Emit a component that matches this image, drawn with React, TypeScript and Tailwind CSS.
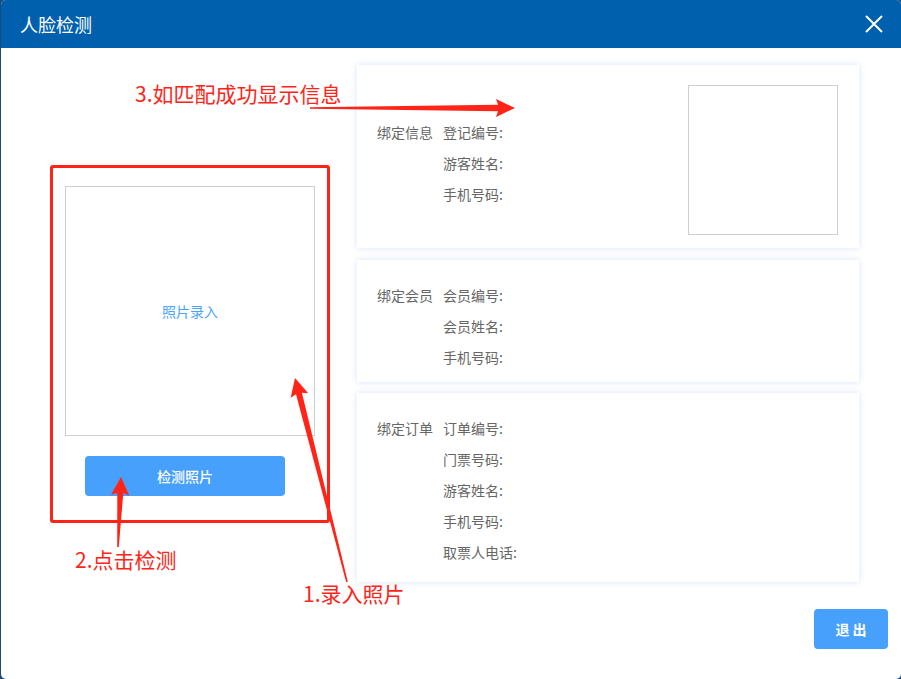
import React from 'react';

type Pt = [number, number];

// arrow as one filled polygon: thin tail growing to a wider shaft, then a head
const arrowPoints = (tail: Pt, tip: Pt, headLen: number, headHalf: number, tailHalf: number, shaftHalf: number) => {
  const dx = tip[0] - tail[0];
  const dy = tip[1] - tail[1];
  const len = Math.hypot(dx, dy);
  const ux = dx / len;
  const uy = dy / len;
  const nx = -uy;
  const ny = ux;
  const bx = tip[0] - ux * headLen;
  const by = tip[1] - uy * headLen;
  const pts: Pt[] = [
    [tail[0] + nx * tailHalf, tail[1] + ny * tailHalf],
    [bx + nx * shaftHalf, by + ny * shaftHalf],
    [bx - ux * 2 + nx * headHalf, by - uy * 2 + ny * headHalf],
    tip,
    [bx - ux * 2 - nx * headHalf, by - uy * 2 - ny * headHalf],
    [bx - nx * shaftHalf, by - ny * shaftHalf],
    [tail[0] - nx * tailHalf, tail[1] - ny * tailHalf],
  ];
  return pts.map((p) => `${p[0].toFixed(1)},${p[1].toFixed(1)}`).join(' ');
};

const InfoRows = ({ title, rows }: { title: string; rows: string[] }) => (
  <div className="flex text-[14px] text-[#666] leading-[31px]">
    <div className="w-[66px] shrink-0">{title}</div>
    <div className="flex flex-col">
      {rows.map((r) => (
        <div key={r}>{r}</div>
      ))}
    </div>
  </div>
);

const cardCls = 'bg-white shadow-[0_0_7px_rgba(205,218,242,0.75)] px-[20px]';

export default function App() {
  return (
    <div
      className="h-[679px] w-[901px] bg-[#1c4a7c] overflow-hidden"
      style={{ fontFamily: '"Microsoft YaHei", "Noto Sans CJK SC", "Noto Sans", sans-serif' }}
    >
      <div className="relative ml-[1px] h-[679px] w-[900px] rounded-[5px] bg-white overflow-hidden">
        {/* header */}
        <div className="flex h-[48px] items-center justify-between bg-[#0060ae] pl-[19px] pr-[18px]">
          <span className="text-[18px] text-white">人脸检测</span>
          <svg width="18" height="18" viewBox="0 0 18 18" className="text-white">
            <path d="M1 1 L17 17 M17 1 L1 17" stroke="currentColor" strokeWidth="2" />
          </svg>
        </div>

        {/* body */}
        <div className="flex flex-col">
          <div className="flex pt-[17px]">
            <div className="ml-[49px] mt-[100px]">
              <div className="box-border flex h-[358px] w-[280px] flex-col rounded-[3px] border-[3px] border-[#ff2216] px-[12px] pt-[18px]">
                <div className="box-border flex h-[250px] w-[250px] items-center justify-center border border-[#cfcfcf] text-[14px] text-[#4aa3ff]">
                  照片录入
                </div>
                <button
                  type="button"
                  className="ml-[20px] mt-[20px] h-[40px] w-[200px] rounded-[4px] bg-[#46a0fc] text-[14px] font-medium text-white"
                >
                  检测照片
                </button>
              </div>
            </div>

            <div className="ml-[27px] flex w-[502px] flex-col">
              <div className={`${cardCls} flex h-[183px] justify-between`}>
                <div className="pt-[52px]">
                  <InfoRows title="绑定信息" rows={['登记编号:', '游客姓名:', '手机号码:']} />
                </div>
                <div className="mt-[20px] mr-[1px] box-border h-[150px] w-[150px] border border-[#cfcfcf]" />
              </div>
              <div className={`${cardCls} mt-[12px] h-[122px] pt-[20px]`}>
                <InfoRows title="绑定会员" rows={['会员编号:', '会员姓名:', '手机号码:']} />
              </div>
              <div className={`${cardCls} mt-[11px] h-[189px] pt-[20px]`}>
                <InfoRows
                  title="绑定订单"
                  rows={['订单编号:', '门票号码:', '游客姓名:', '手机号码:', '取票人电话:']}
                />
              </div>
            </div>
          </div>

          <div className="flex justify-end pr-[13px] pt-[27px]">
            <button
              type="button"
              className="h-[40px] w-[74px] rounded-[4px] bg-[#46a0fc] text-[14px] font-semibold text-white"
            >
              退 出
            </button>
          </div>
        </div>

        {/* annotations */}
        <div className="pointer-events-none absolute left-[134px] top-[79px] text-[21px] leading-[28px] text-[#ff2418]">
          3.如匹配成功显示信息
        </div>
        <div className="pointer-events-none absolute left-[74px] top-[545px] text-[21px] leading-[28px] text-[#ff2418]">
          2.点击检测
        </div>
        <div className="pointer-events-none absolute left-[302px] top-[579px] text-[21px] leading-[28px] text-[#ff2418]">
          1.录入照片
        </div>
        <svg className="pointer-events-none absolute left-[-1px] top-0" width="901" height="679">
          <polygon points={arrowPoints([310, 108], [515, 108], 17, 9, 0.8, 3.2)} fill="#ff2418" />
          <polygon points={arrowPoints([118, 547], [121, 477], 16, 9, 0.8, 3)} fill="#ff2418" />
          <polygon points={arrowPoints([347, 582], [295, 378], 16, 9, 0.8, 3)} fill="#ff2418" />
        </svg>
      </div>
    </div>
  );
}
